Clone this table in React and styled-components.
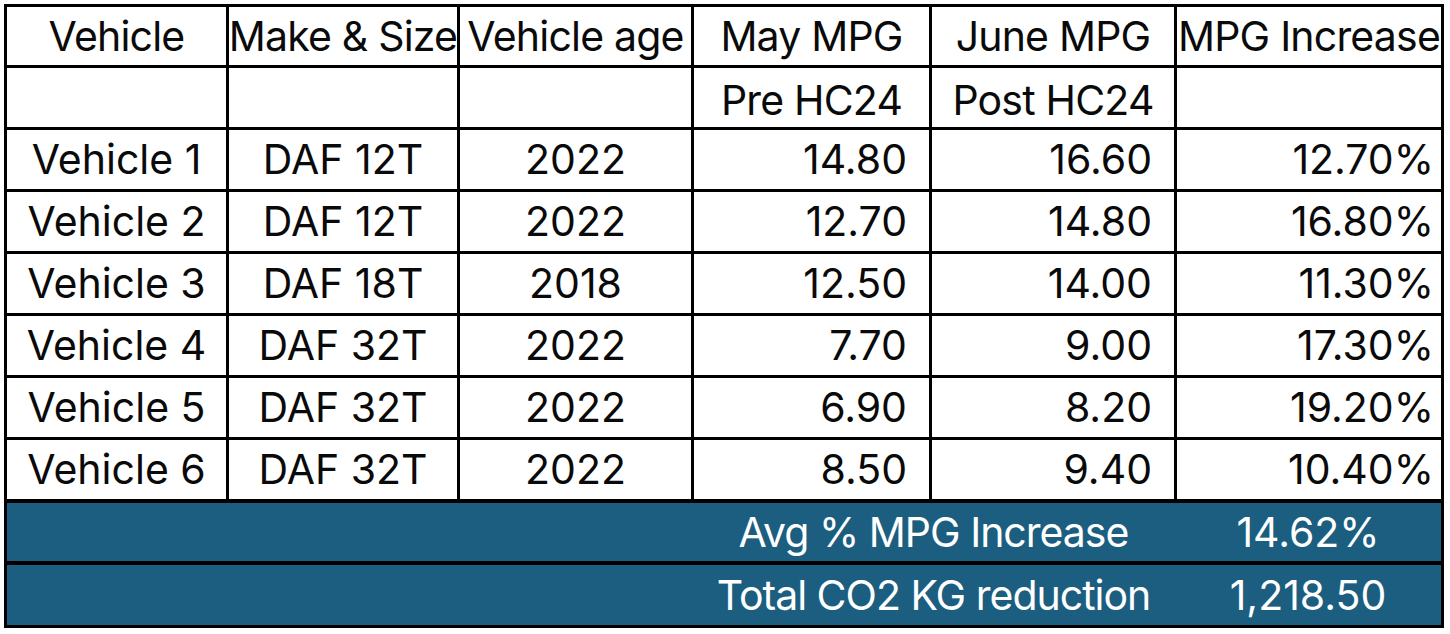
import React from "react";
import styled, { createGlobalStyle } from "styled-components";

const GlobalStyle = createGlobalStyle`
  html, body {
    margin: 0;
    padding: 0;
    background: #ffffff;
  }
  body {
    font-family: Inter, "Noto Sans", "Liberation Sans", sans-serif;
  }
`;

const Page = styled.div`
  padding: 4px 0 0 4px;
  width: 1440px;
`;

const Frame = styled.div`
  background: #000;
  padding: 3px;
  display: flex;
  flex-direction: column;
  gap: 4px;
`;

const Grid = styled.div`
  display: grid;
  grid-template-columns: 219px 228px 231px 235px 242px 1fr;
  grid-template-rows: 58px 59px repeat(6, 59px);
  gap: 3px;
  background: #000;
`;

const Cell = styled.div`
  background: #fff;
  color: #0a0a0a;
  font-size: 41px;
  letter-spacing: ${(p) => (p.$head ? "-0.8px" : "0px")};
  line-height: 1;
  display: flex;
  align-items: center;
  justify-content: ${(p) => (p.$align === "right" ? "flex-end" : "center")};
  padding-right: ${(p) => p.$pr || 0}px;
  padding-top: ${(p) => p.$pt || 0}px;
  white-space: nowrap;
  overflow: visible;
`;

const SummaryRow = styled.div`
  display: grid;
  grid-template-columns: 685px 483px 1fr;
  height: ${(p) => p.$h}px;
  background: #1b5e7f;
  color: #fff;
  font-size: 41px;
  line-height: 1;
`;

const SummaryText = styled.div`
  display: flex;
  align-items: center;
  justify-content: center;
  white-space: nowrap;
  letter-spacing: ${(p) => (p.$tight ? "-1px" : "0px")};
`;

const headers = [
  ["Vehicle", "Make & Size", "Vehicle age", "May MPG", "June MPG", "MPG Increase"],
  ["", "", "", "Pre HC24", "Post HC24", ""],
];

const rows = [
  ["Vehicle 1", "DAF 12T", "2022", "14.80", "16.60", "12.70%"],
  ["Vehicle 2", "DAF 12T", "2022", "12.70", "14.80", "16.80%"],
  ["Vehicle 3", "DAF 18T", "2018", "12.50", "14.00", "11.30%"],
  ["Vehicle 4", "DAF 32T", "2022", "7.70", "9.00", "17.30%"],
  ["Vehicle 5", "DAF 32T", "2022", "6.90", "8.20", "19.20%"],
  ["Vehicle 6", "DAF 32T", "2022", "8.50", "9.40", "10.40%"],
];

const dataPad = [0, 0, 0, 22, 22, 7];

export default function App() {
  return (
    <>
      <GlobalStyle />
      <Page>
        <Frame>
          <Grid>
            {headers.map((r, i) =>
              r.map((t, j) => (
                <Cell key={`h${i}-${j}`} $head $pt={i === 1 ? 5 : 0}>
                  {t}
                </Cell>
              ))
            )}
            {rows.map((r, i) =>
              r.map((t, j) => (
                <Cell
                  key={`r${i}-${j}`}
                  $align={j >= 3 ? "right" : "center"}
                  $pr={dataPad[j]}
                >
                  {t}
                </Cell>
              ))
            )}
          </Grid>
          <SummaryRow $h={58}>
            <span />
            <SummaryText $tight>Avg % MPG Increase</SummaryText>
            <SummaryText>14.62%</SummaryText>
          </SummaryRow>
          <SummaryRow $h={60}>
            <span />
            <SummaryText $tight>Total CO2 KG reduction</SummaryText>
            <SummaryText>1,218.50</SummaryText>
          </SummaryRow>
        </Frame>
      </Page>
    </>
  );
}
